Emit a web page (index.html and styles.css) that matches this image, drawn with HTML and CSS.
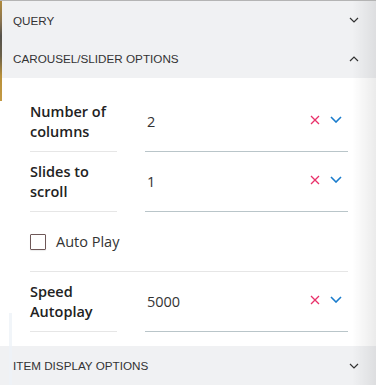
FILE: index.html
```html
<!DOCTYPE html>
<html>
<head>
<meta charset="utf-8">
<link rel="stylesheet" href="styles.css">
</head>
<body>
<div class="panel">
  <div class="edge"></div>
  <div class="section-head first">
    <span>QUERY</span>
    <svg class="chev" viewBox="0 0 10 6" width="10" height="6"><path d="M1 1 L5 5 L9 1" fill="none" stroke="#333" stroke-width="1.2"/></svg>
  </div>
  <div class="section-head open">
    <span>CAROUSEL/SLIDER OPTIONS</span>
    <svg class="chev" viewBox="0 0 10 6" width="10" height="6"><path d="M1 5 L5 1 L9 5" fill="none" stroke="#333" stroke-width="1.2"/></svg>
  </div>
  <div class="content">
    <div class="row">
      <div class="label">Number of columns</div>
      <div class="field">
        <span class="value">2</span>
        <svg class="clear" viewBox="0 0 10 10" width="10" height="10"><path d="M1 1 L9 9 M9 1 L1 9" stroke="#e8306a" stroke-width="1.3"/></svg>
        <svg class="drop" viewBox="0 0 12 7" width="12" height="7"><path d="M1 1 L6 6 L11 1" fill="none" stroke="#1a7ccc" stroke-width="1.6"/></svg>
      </div>
    </div>
    <div class="row">
      <div class="label">Slides to scroll</div>
      <div class="field">
        <span class="value">1</span>
        <svg class="clear" viewBox="0 0 10 10" width="10" height="10"><path d="M1 1 L9 9 M9 1 L1 9" stroke="#e8306a" stroke-width="1.3"/></svg>
        <svg class="drop" viewBox="0 0 12 7" width="12" height="7"><path d="M1 1 L6 6 L11 1" fill="none" stroke="#1a7ccc" stroke-width="1.6"/></svg>
      </div>
    </div>
    <div class="row check-row">
      <span class="box"></span>
      <span class="check-label">Auto Play</span>
    </div>
    <div class="row">
      <div class="label">Speed Autoplay</div>
      <div class="field">
        <span class="value">5000</span>
        <svg class="clear" viewBox="0 0 10 10" width="10" height="10"><path d="M1 1 L9 9 M9 1 L1 9" stroke="#e8306a" stroke-width="1.3"/></svg>
        <svg class="drop" viewBox="0 0 12 7" width="12" height="7"><path d="M1 1 L6 6 L11 1" fill="none" stroke="#1a7ccc" stroke-width="1.6"/></svg>
      </div>
    </div>
  </div>
  <div class="section-head last">
    <span>ITEM DISPLAY OPTIONS</span>
    <svg class="chev" viewBox="0 0 10 6" width="10" height="6"><path d="M1 1 L5 5 L9 1" fill="none" stroke="#333" stroke-width="1.2"/></svg>
  </div>
  <div class="scroll-line"></div>
  <div class="shade"></div>
</div>
</body>
</html>
```

FILE: styles.css
```css
html, body {
  margin: 0;
  padding: 0;
  background: #fff;
}
.panel {
  position: relative;
  width: 376px;
  height: 385px;
  overflow: hidden;
  border-top: 1px solid #b4b4b4;
  box-sizing: border-box;
  background: #fff;
}
.edge {
  position: absolute;
  left: 0;
  top: 0;
  width: 2px;
  height: 100px;
  background: linear-gradient(to bottom, #b08a3c 0, #8a7450 20px, #55524c 35px, #6a6048 55px, #b8903a 75px, #c49a44 100px);
}
.section-head {
  display: flex;
  align-items: center;
  justify-content: space-between;
  background: #f0f1f3;
  padding: 0 17px 0 13px;
  font-family: "Liberation Sans", Arial, sans-serif;
  font-size: 11.7px;
  color: #333;
}
.section-head.first {
  height: 38px;
}
.section-head.open {
  height: 39px;
}
.section-head.last {
  height: 39px;
}
.chev {
  display: block;
}
.content {
  padding: 14px 28px 14px 30px;
}
.row {
  display: flex;
  align-items: stretch;
  height: 60px;
  box-sizing: border-box;
}
.label {
  width: 87px;
  flex: none;
  display: flex;
  align-items: center;
  font-family: "Open Sans", sans-serif;
  font-weight: 600;
  font-size: 14.5px;
  line-height: 20px;
  color: #222;
  border-bottom: 1px solid #e6e6e6;
}
.field {
  flex: 1;
  margin-left: 28px;
  display: flex;
  align-items: center;
  border-bottom: 1px solid #b9c5c9;
  padding-left: 2px;
  padding-right: 6px;
}
.value {
  flex: 1;
  font-family: "Open Sans", sans-serif;
  font-size: 14.5px;
  color: #333;
}
.clear {
  display: block;
  margin-right: 10px;
  margin-bottom: 4px;
}
.drop {
  display: block;
  margin-bottom: 4px;
}
.check-row {
  align-items: center;
  border-bottom: 1px solid #e6e6e6;
}
.box {
  width: 16px;
  height: 16px;
  box-sizing: border-box;
  border: 1px solid #6e5858;
  border-radius: 1px;
  box-shadow: 0 1px 1px rgba(0,0,0,0.08);
}
.check-label {
  margin-left: 10px;
  font-family: "Open Sans", sans-serif;
  font-size: 14.5px;
  color: #333;
}
.scroll-line {
  position: absolute;
  left: 9px;
  top: 312px;
  width: 3px;
  height: 73px;
  background: #edf3f8;
  opacity: 0.8;
}
.shade {
  position: absolute;
  right: 0;
  top: 0;
  width: 24px;
  height: 100%;
  background: linear-gradient(to right, rgba(0,0,0,0), rgba(0,0,0,0.08));
  pointer-events: none;
}
```
